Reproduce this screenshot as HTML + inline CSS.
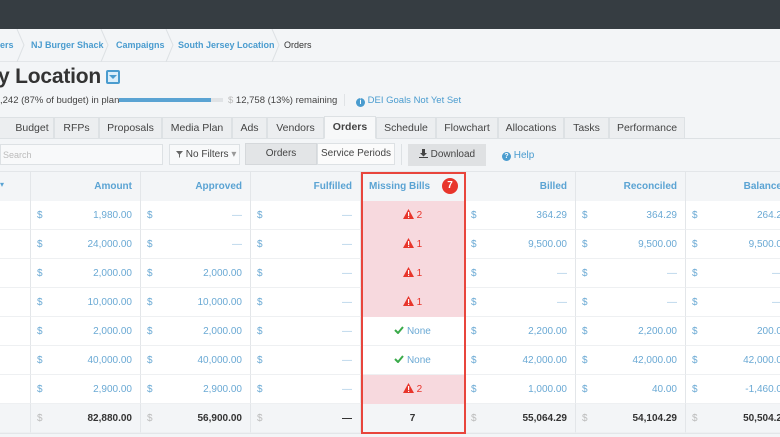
<!DOCTYPE html><html><head><style>
*{box-sizing:border-box;margin:0;padding:0}
body{width:780px;height:437px;overflow:hidden;background:#f3f5f7;font-family:"Liberation Sans",sans-serif;font-size:11px;color:#333;position:relative}
.a{position:absolute;white-space:nowrap}
.bc{color:#4a9ccf;font-weight:bold;font-size:9px}
.tab{position:absolute;top:117px;height:22px;border:1px solid #dde1e4;background:#eceef0;color:#444;font-size:10.5px;text-align:center;line-height:20px}
.cell{position:absolute;height:29px;line-height:29px;color:#6aa9d4;font-size:10px;border-right:1px solid #e3e6e9}
.hd{position:absolute;top:172px;height:29px;line-height:29px;color:#5aa3d3;font-weight:bold;font-size:10px;text-align:right;border-right:1px solid #e3e6e9}
</style></head><body>
<div class="a" style="left:0;top:0;width:780px;height:29px;background:#363d42"></div>
<div class="a" style="left:0;top:29px;width:780px;height:33px;background:#f3f5f7;border-bottom:1px solid #e3e6e9"></div>
<div class="a bc" style="left:0;top:40px">ers</div>
<div class="a bc" style="left:31px;top:40px">NJ Burger Shack</div>
<div class="a bc" style="left:116px;top:40px">Campaigns</div>
<div class="a bc" style="left:178px;top:40px">South Jersey Location</div>
<div class="a" style="left:284px;top:40px;font-size:9px;color:#333">Orders</div>
<svg class="a" style="left:0;top:29px" width="300" height="33"><g fill="none" stroke="#dde1e4"><path d="M17 0L24 16L17 33M101 0L108 16L101 33M166 0L173 16L166 33M272 0L279 16L272 33"/></g></svg>
<div class="a" style="left:-2px;top:65px;font-size:21px;font-weight:bold;color:#333;letter-spacing:-0.2px">y Location</div>
<div class="a" style="left:106px;top:70px;width:14px;height:14px;border:2px solid #4a9ccf;border-radius:2px;background:#dbeefa"><div style="margin:3px auto 0;width:0;height:0;border-left:4px solid transparent;border-right:4px solid transparent;border-top:4px solid #4a9ccf"></div></div>
<div class="a" style="left:0;top:95px;font-size:9.5px;color:#444">,242 (87% of budget) in plan</div>
<div class="a" style="left:119px;top:98px;width:104px;height:4px;background:#e0e3e6"><div style="width:92px;height:4px;background:#5aa3d3"></div></div>
<div class="a" style="left:228px;top:95px;font-size:9.5px;color:#444"><span style="color:#bbb">$</span> 12,758 (13%) remaining</div>
<div class="a" style="left:344px;top:94px;width:1px;height:12px;background:#e0e3e6"></div>
<div class="a" style="left:356px;top:95px;font-size:9.5px;color:#4a9ccf"><span style="display:inline-block;width:9px;height:9px;border-radius:50%;background:#4a9ccf;color:#fff;font-size:7px;text-align:center;line-height:9px;font-weight:bold;vertical-align:-1px">i</span> DEI Goals Not Yet Set</div>
<div class="a" style="left:0;top:138px;width:780px;height:1px;background:#dde1e4"></div>
<div class="tab" style="left:-2px;width:56px;padding-left:12px">Budget</div>
<div class="tab" style="left:54px;width:45px">RFPs</div>
<div class="tab" style="left:99px;width:63px">Proposals</div>
<div class="tab" style="left:162px;width:70px">Media Plan</div>
<div class="tab" style="left:232px;width:35px">Ads</div>
<div class="tab" style="left:267px;width:57px">Vendors</div>
<div class="tab" style="left:324px;width:52px;background:#f7f8f9;font-weight:bold;border-bottom-color:#f7f8f9;top:116px;height:23px">Orders</div>
<div class="tab" style="left:376px;width:60px">Schedule</div>
<div class="tab" style="left:436px;width:62px">Flowchart</div>
<div class="tab" style="left:498px;width:66px">Allocations</div>
<div class="tab" style="left:564px;width:45px">Tasks</div>
<div class="tab" style="left:609px;width:76px">Performance</div>
<div class="a" style="left:0;top:144px;width:163px;height:21px;background:#f8f9fa;border:1px solid #dde1e4;font-size:9px;color:#bbb;padding:5px 2px">Search</div>
<div class="a" style="left:169px;top:144px;width:71px;height:21px;background:#f8f9fa;border:1px solid #dde1e4;font-size:10px;color:#444;line-height:19px;padding-left:6px"><svg width="7" height="7" style="vertical-align:-1px"><path d="M0 0H7L4 3.5V7L3 6V3.5Z" fill="#666"/></svg> No Filters <span style="color:#999">&#9662;</span></div>
<div class="a" style="left:245px;top:143px;width:72px;height:22px;background:#e3e5e7;border:1px solid #d5d8db;font-size:10px;color:#444;text-align:center;line-height:20px">Orders</div>
<div class="a" style="left:317px;top:143px;width:78px;height:22px;background:#fbfbfb;border:1px solid #dde1e4;font-size:10px;color:#444;text-align:center;line-height:20px">Service Periods</div>
<div class="a" style="left:401px;top:144px;width:1px;height:21px;background:#dde1e4"></div>
<div class="a" style="left:408px;top:144px;width:78px;height:22px;background:#dfe1e3;font-size:10px;color:#444;text-align:center;line-height:22px"><svg width="9" height="9" style="vertical-align:-1px"><path d="M3 0H6V4H8L4.5 7.5L1 4H3ZM0 8H9V9H0Z" fill="#444"/></svg> Download</div>
<div class="a" style="left:502px;top:150px;font-size:10px;color:#4a9ccf"><span style="display:inline-block;width:9px;height:9px;border-radius:50%;background:#4a9ccf;color:#fff;font-size:7px;text-align:center;line-height:9px;font-weight:bold">?</span> Help</div>
<div class="a" style="left:0;top:171px;width:780px;height:1px;background:#e3e6e9"></div>
<div class="a" style="left:0;top:172px;width:780px;height:29px;background:#f3f5f7"></div>
<div class="a" style="left:0;top:201px;width:780px;height:203px;background:#fff"></div>
<div class="a" style="left:0;top:404px;width:780px;height:29px;background:#f3f5f7;border-top:1px solid #e3e6e9"></div>
<div class="a" style="left:0;top:433px;width:780px;height:4px;background:#f3f5f7;border-top:1px solid #e3e6e9"></div>
<div class="hd" style="left:0;width:31px"></div>
<div class="a" style="left:0;top:180px;color:#5aa3d3;font-size:8px">&#9662;</div>
<div class="hd" style="left:31px;width:110px;padding-right:8px">Amount</div>
<div class="hd" style="left:141px;width:110px;padding-right:8px">Approved</div>
<div class="hd" style="left:251px;width:110px;padding-right:8px">Fulfilled</div>
<div class="hd" style="left:361px;width:104px;text-align:left;padding-left:8px">Missing Bills</div>
<div class="a" style="left:442px;top:178px;width:16px;height:16px;border-radius:50%;background:#e8352b;color:#fff;font-size:10px;text-align:center;line-height:16px;font-weight:bold">7</div>
<div class="hd" style="left:465px;width:111px;padding-right:8px">Billed</div>
<div class="hd" style="left:576px;width:110px;padding-right:8px">Reconciled</div>
<div class="hd" style="left:686px;width:110px;padding-right:14px;text-align:right;border-right:none">Balance</div>
<div id="rows"></div>
<div class="a" style="left:361px;top:172px;width:105px;height:262px;border:2px solid #e8453c"></div>
<script>
var d=[["1,980.00","—","—","w2","364.29","364.29","264.2"],["24,000.00","—","—","w1","9,500.00","9,500.00","9,500.0"],["2,000.00","2,000.00","—","w1","—","—","—"],["10,000.00","10,000.00","—","w1","—","—","—"],["2,000.00","2,000.00","—","n","2,200.00","2,200.00","200.0"],["40,000.00","40,000.00","—","n","42,000.00","42,000.00","42,000.0"],["2,900.00","2,900.00","—","w2","1,000.00","40.00","-1,460.0"]];
var cols=[[31,110],[141,110],[251,110],[361,104],[465,111],[576,110],[686,110]];
var tri='<svg width="11" height="10" style="vertical-align:-1px"><path d="M5.5 0L11 10H0Z" fill="#e8352b"/><rect x="5" y="3" width="1.2" height="4" fill="#fff"/><rect x="5" y="7.8" width="1.2" height="1.2" fill="#fff"/></svg>';
var chk='<svg width="10" height="8" style="vertical-align:0"><path d="M1 4L4 7L9 1" fill="none" stroke="#3aaa4a" stroke-width="2"/></svg>';
var h="";
function row(y,vals,bg,tot){
 h+='<div class="cell" style="left:0;top:'+y+'px;width:31px;background:'+bg+';border-bottom:1px solid #eef0f2"></div>';
 for(var i=0;i<7;i++){var c=cols[i],v=vals[i];
  if(i==3){
   var pink=v[0]=="w";var cont;
   if(tot)cont='<b style="color:#333">7</b>';
   else if(pink)cont=tri+' <span style="color:#e8352b">'+v[1]+'</span>';
   else cont=chk+' <span style="color:#6aa9d4">None</span>';
   h+='<div class="cell" style="left:'+c[0]+'px;top:'+y+'px;width:'+c[1]+'px;text-align:center;background:'+(pink?'#f7d9de':bg)+';border-bottom:1px solid '+(pink?'#f7d9de':'#eef0f2')+'">'+cont+'</div>';
  }else{
   var st=tot?'color:#333;font-weight:bold':(v=="—"?'color:#a8cbe4':'');
   var dv=tot?'color:#bbb':'';
   h+='<div class="cell" style="left:'+c[0]+'px;top:'+y+'px;width:'+c[1]+'px;background:'+bg+';border-bottom:1px solid #eef0f2'+(i==6?';border-right:none':'')+'"><span style="position:absolute;left:6px;'+dv+'">$</span><span style="position:absolute;right:'+(i==6?14:8)+'px;'+st+'">'+v+'</span></div>';
  }
 }
}
for(var r=0;r<7;r++)row(201+r*29,d[r],"#fff",false);
row(404,["82,880.00","56,900.00","—","t","55,064.29","54,104.29","50,504.2"],"#f3f5f7",true);
document.getElementById("rows").innerHTML=h;
</script>
</body></html>
